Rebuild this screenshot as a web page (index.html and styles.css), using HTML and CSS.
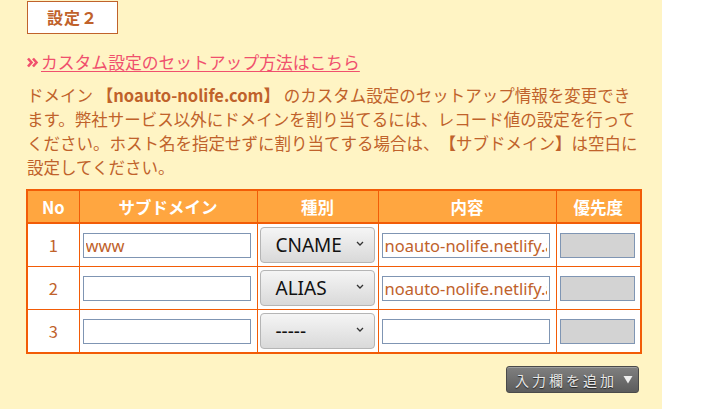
FILE: index.html
```html
<!DOCTYPE html>
<html lang="ja">
<head>
<meta charset="utf-8">
<title>設定２</title>
<link rel="stylesheet" href="styles.css">
</head>
<body>
<div class="panel">
  <div class="title">設定２</div>
  <p class="howto">
    <svg class="chev" width="12" height="11" viewBox="0 0 12 11"><path d="M1 1.5 L4.5 5.5 L1 9.5 M6 1.5 L9.5 5.5 L6 9.5" fill="none" stroke="#f0506e" stroke-width="2.6" stroke-linejoin="miter"/></svg><a href="#" class="link">カスタム設定のセットアップ方法はこちら</a>
  </p>
  <p class="desc">ドメイン <b class="dom">【noauto-nolife.com】</b> のカスタム設定のセットアップ情報を変更できます。弊社サービス以外にドメインを割り当てるには、レコード値の設定を行ってください。ホスト名を指定せずに割り当てする場合は、<span class="br">【</span>サブドメイン<span class="br">】</span>は空白に設定してください。</p>
  <table class="records">
    <colgroup>
      <col class="c-no"><col class="c-sub"><col class="c-type"><col class="c-val"><col class="c-pri">
    </colgroup>
    <thead>
      <tr><th>No</th><th>サブドメイン</th><th>種別</th><th>内容</th><th>優先度</th></tr>
    </thead>
    <tbody>
      <tr>
        <td class="num">1</td>
        <td><input class="field" type="text" value="www"></td>
        <td class="type"><div class="sel"><span>CNAME</span><svg class="dd" width="8" height="5" viewBox="0 0 8 5"><path d="M1 1 L4 4 L7 1" fill="none" stroke="#333" stroke-width="1.3"/></svg></div></td>
        <td><input class="field" type="text" value="noauto-nolife.netlify.app"></td>
        <td><input class="field pri" type="text" disabled></td>
      </tr>
      <tr>
        <td class="num">2</td>
        <td><input class="field" type="text" value=""></td>
        <td class="type"><div class="sel"><span>ALIAS</span><svg class="dd" width="8" height="5" viewBox="0 0 8 5"><path d="M1 1 L4 4 L7 1" fill="none" stroke="#333" stroke-width="1.3"/></svg></div></td>
        <td><input class="field" type="text" value="noauto-nolife.netlify.app"></td>
        <td><input class="field pri" type="text" disabled></td>
      </tr>
      <tr>
        <td class="num">3</td>
        <td><input class="field" type="text" value=""></td>
        <td class="type"><div class="sel"><span>-----</span><svg class="dd" width="8" height="5" viewBox="0 0 8 5"><path d="M1 1 L4 4 L7 1" fill="none" stroke="#333" stroke-width="1.3"/></svg></div></td>
        <td><input class="field" type="text" value=""></td>
        <td><input class="field pri" type="text" disabled></td>
      </tr>
    </tbody>
  </table>
  <div class="actions">
    <button class="add" type="button">入力欄を追加<svg class="tri" width="10" height="9" viewBox="0 0 10 9"><path d="M0.5 1 H9.5 L5 8.5 Z" fill="#eeeeee"/></svg></button>
  </div>
</div>
</body>
</html>
```

FILE: styles.css
```css
html, body {
  margin: 0;
  padding: 0;
  background: #ffffff;
}
body {
  font-family: "Noto Sans CJK JP", "Noto Sans", sans-serif;
  color: #c0622b;
  text-spacing-trim: space-all;
}
.panel {
  width: 662px;
  height: 409px;
  box-sizing: border-box;
  background: #fff4c4;
  padding: 1px 0 0 26px;
}
.title {
  margin-left: 1px;
  width: 91px;
  height: 33px;
  box-sizing: border-box;
  border: 1px solid #c0622b;
  background: #ffffff;
  color: #c0622b;
  font-weight: bold;
  font-size: 16px;
  line-height: 31px;
  text-align: center;
  letter-spacing: 1px;
}
.howto {
  margin: 16px 0 0 1px;
  font-size: 16.8px;
  line-height: 24px;
  display: flex;
  align-items: center;
}
.chev {
  margin-right: 2px;
  flex: none;
}
.link {
  color: #f0506e;
  text-decoration: underline;
  text-decoration-thickness: 1px;
  text-underline-offset: 2px;
}
.desc {
  margin: 9px 0 0 1px;
  width: 618px;
  font-size: 16.5px;
  line-height: 24px;
}
.dom {
  font-weight: bold;
}
.br {
  font-weight: bold;
}
.records {
  margin-top: 10px;
  border-collapse: collapse;
  table-layout: fixed;
  width: 614px;
  border: 2px solid #f25c07;
  background: #ffffff;
}
.c-no { width: 52px; }
.c-sub { width: 178px; }
.c-type { width: 121px; }
.c-val { width: 178px; }
.c-pri { width: 85px; }
.records th {
  background: #ffa640;
  color: #ffffff;
  font-weight: bold;
  font-size: 16.5px;
  height: 31px;
  padding: 0;
  border: 1px solid #f25c07;
  border-bottom-width: 2px;
  text-align: center;
}
.records td {
  border: 1px solid #f25c07;
  height: 42px;
  padding: 0 0 0 3px;
  text-align: left;
  vertical-align: middle;
}
.records td.num {
  padding: 0;
  text-align: center;
  font-size: 16.5px;
  color: #c0622b;
}
.records td.type {
  padding-left: 2px;
}
.field {
  display: block;
  width: 168px;
  height: 25px;
  box-sizing: border-box;
  border: 1px solid #7f95b3;
  background: #ffffff;
  font-family: "Noto Sans", "Noto Sans CJK JP", sans-serif;
  font-size: 16.5px;
  color: #c0622b;
  padding: 0 2px;
  margin: 0;
  outline: none;
}
.field.pri {
  width: 75px;
  background: #d3d3d3;
}
.sel {
  width: 115px;
  height: 36px;
  box-sizing: border-box;
  border: 1px solid #b5b5b5;
  border-radius: 4px;
  background: linear-gradient(#f5f5f5, #d9d9d9);
  display: flex;
  align-items: center;
  justify-content: space-between;
  padding: 0 10px 0 15px;
  color: #111111;
  font-family: "Noto Sans", sans-serif;
  font-size: 19px;
}
.dd {
  flex: none;
  margin-top: -4px;
}
.actions {
  width: 614px;
  display: flex;
  justify-content: flex-end;
  margin-top: 12px;
}
.add {
  width: 133px;
  height: 27px;
  margin-right: 1px;
  box-sizing: border-box;
  border: 1px solid #4a4a4a;
  border-radius: 3px;
  background: linear-gradient(#808080, #5c5c5c);
  box-shadow: inset 0 1px 0 rgba(255,255,255,0.25);
  color: #e8e8e8;
  font-family: "Noto Sans CJK JP", sans-serif;
  font-size: 14px;
  letter-spacing: 3px;
  text-shadow: 0 1px 1px #222;
  display: flex;
  align-items: center;
  justify-content: center;
  gap: 6px;
  padding: 0 0 0 3px;
}
.tri {
  flex: none;
}
```
